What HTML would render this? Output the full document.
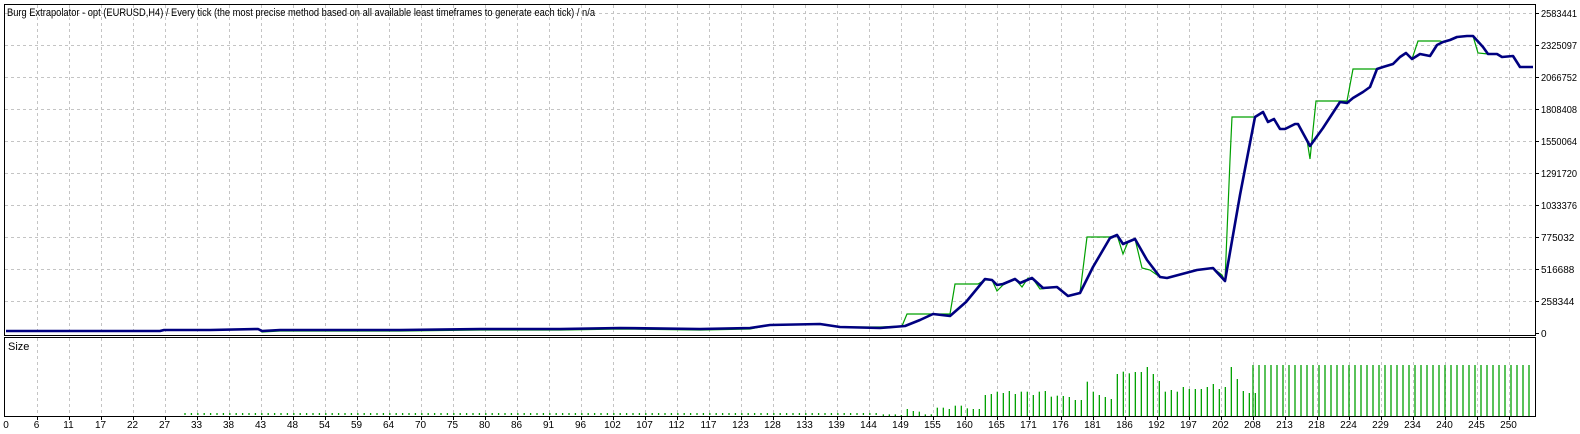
<!DOCTYPE html>
<html><head><meta charset="utf-8"><style>
html,body{margin:0;padding:0;background:#fff;width:1580px;height:434px;overflow:hidden}
svg{display:block}
text{font-family:"Liberation Sans",sans-serif;font-size:10px;fill:#000}
</style></head><body>
<svg width="1580" height="434" viewBox="0 0 1580 434" xmlns="http://www.w3.org/2000/svg">
<g id="grid" stroke="#c4c4c4" stroke-width="1" stroke-dasharray="3,3" fill="none"></g>
<polyline fill="none" stroke="#00a000" stroke-width="1.2" points="6,331 24,331 160,331 164,330 210,330 258,329 262,332 280,331 300,331 400,331 480,330 560,330 620,329 700,330 750,329 770,325 820,324 840,327 880,327 902,326 907,314 930,314 950,314 955,284 978,284 985,280 992,280 997,291 1003,285 1015,279 1022,287 1028,278 1033,279 1040,289 1057,287 1068,296 1080,293 1087,237 1110,237 1117,235 1123,254 1128,242 1135,239 1142,268 1150,270 1160,277 1167,278 1197,270 1213,268 1222,275 1225,281 1230,160 1232,117 1255,117 1263,112 1268,122 1274,119 1280,129 1285,129 1295,124 1298,124 1307,140 1310,159 1316,101 1347,101 1353,69 1377,69 1383,67 1393,64 1400,57 1406,53 1412,59 1418,41 1440,41 1443,42 1450,40 1457,37 1467,36 1473,36 1478,53 1488,54 1497,54 1502,57 1513,56 1520,67 1533,67"/>
<polyline fill="none" stroke="#000080" stroke-width="2.6" stroke-linejoin="round" points="6,331 24,331 160,331 164,330 210,330 258,329 262,331 280,330 300,330 400,330 480,329 560,329 620,328 700,329 750,328 770,325 820,324 840,327 880,328 893,327 905,326 920,320 933,314 950,316 966,302 985,279 992,280 997,285 1003,284 1015,279 1020,283 1032,278 1043,288 1057,287 1068,296 1080,293 1093,267 1110,238 1117,235 1123,244 1135,239 1147,260 1160,277 1167,278 1197,270 1213,268 1225,281 1240,195 1255,117 1263,112 1268,122 1274,119 1280,129 1285,129 1295,124 1298,124 1310,146 1323,128 1340,102 1347,103 1353,98 1363,92 1370,87 1377,69 1383,67 1393,64 1400,57 1406,53 1412,59 1420,54 1430,56 1437,45 1443,42 1450,40 1457,37 1467,36 1473,36 1483,47 1488,54 1497,54 1502,57 1513,56 1520,67 1533,67"/>
<g id="bars" stroke="#00a000" stroke-width="1.3"></g>
<rect x="4.5" y="4.5" width="1531" height="331" fill="none" stroke="#000" stroke-width="1"/>
<rect x="4.5" y="337.5" width="1531" height="79" fill="none" stroke="#000" stroke-width="1"/>
<text x="7" y="16" textLength="588" lengthAdjust="spacingAndGlyphs" style="font-size:11px">Burg Extrapolator - opt (EURUSD,H4) / Every tick (the most precise method based on all available least timeframes to generate each tick) / n/a</text>
<text x="8" y="350" style="font-size:11px">Size</text>
<g id="ylab"></g>
<g id="xlab"></g>
</svg>
<script>
var ns="http://www.w3.org/2000/svg";
function el(p,t,a,txt){var e=document.createElementNS(ns,t);for(var k in a)e.setAttribute(k,a[k]);if(txt!=null)e.textContent=txt;document.getElementById(p).appendChild(e);return e;}
for(var k=0;k<=46;k++){var x=36.5+32*k;x=Math.round(x)+0.5;el("grid","line",{x1:x,y1:5,x2:x,y2:335});el("grid","line",{x1:x,y1:338,x2:x,y2:416});}
for(var k=0;k<=9;k++){var y=13.5+32*k;el("grid","line",{x1:5,y1:y,x2:1535,y2:y});}
var yl=["2583441","2325097","2066752","1808408","1550064","1291720","1033376","775032","516688","258344","0"];
for(var k=0;k<yl.length;k++){var y=13+32*k;el("ylab","line",{x1:1536,y1:y+0.5,x2:1539,y2:y+0.5,stroke:"#000"});var t=el("ylab","text",{x:1541,y:y+4},yl[k]);if(yl[k].length==7){t.setAttribute("textLength","36");t.setAttribute("lengthAdjust","spacingAndGlyphs");}}
var xl=[0,6,11,17,22,27,33,38,43,48,54,59,64,70,75,80,86,91,96,102,107,112,117,123,128,133,139,144,149,155,160,165,171,176,181,186,192,197,202,208,213,218,224,229,234,240,245,250];
for(var k=0;k<xl.length;k++){var x=k==0?6:36.5+32*(k-1);el("xlab","text",{x:x,y:428,"text-anchor":"middle"},String(xl[k]));if(k>0)el("xlab","line",{x1:Math.round(x)+0.5,y1:417,x2:Math.round(x)+0.5,y2:420,stroke:"#000"});}
for(var x=185;x<880;x+=6.4){el("bars","line",{x1:x,y1:415,x2:x,y2:413});}
var b=[[10,178],[28,178],[46,178],[64,180],[82,162],[100,168],[118,170],[136,178],[154,178],[172,158],[190,158],[208,162],[226,152],[244,152],[262,160],[280,162],[298,162],[316,120],[334,117],[352,110],[370,114],[388,108],[406,117],[424,110],[442,110],[460,120],[478,110],[496,108],[514,125],[532,122],[550,123],[568,126],[586,135],[604,135],[622,80],[640,110],[658,120],[676,126],[694,132],[712,57],[730,50],[748,55],[766,51],[784,51],[802,36],[820,57],[838,78],[856,110],[874,105],[892,110],[910,96],[928,102],[946,102],[964,102],[982,96],[1000,87],[1018,102],[1036,96],[1054,36],[1072,72],[1090,108],[1108,114],[1126,114]];
for(var i=0;i<b.length;i++){var x=880+b[i][0]/3;el("bars","line",{x1:x,y1:416,x2:x,y2:355+b[i][1]/3});}
for(var x=1253;x<1530;x+=6){el("bars","line",{x1:x,y1:416,x2:x,y2:365});}
</script>
</body></html>
